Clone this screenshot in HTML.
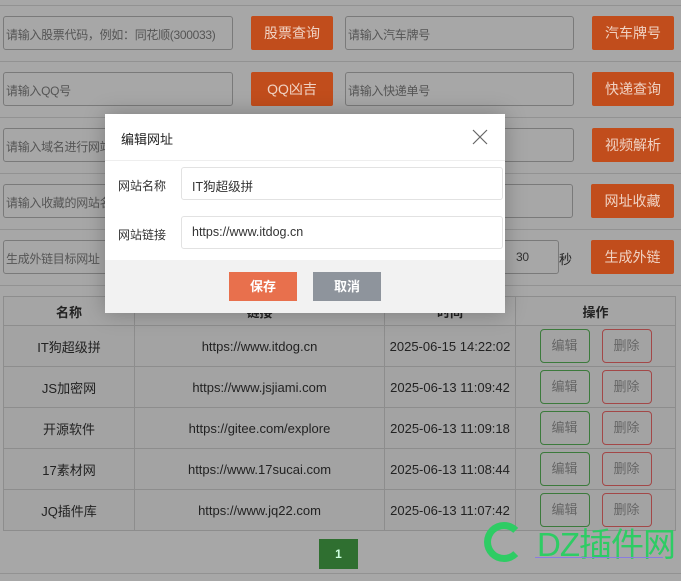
<!DOCTYPE html>
<html><head><meta charset="utf-8"><style>
*{box-sizing:border-box;margin:0;padding:0}
body{width:681px;height:581px;overflow:hidden;background:#a7a7a7;font-family:"Liberation Sans","Noto Sans CJK SC",sans-serif;position:relative;color:#222}
.a{position:absolute}
.hl{position:absolute;left:0;width:681px;height:1px;background:#929292}
.in{position:absolute;height:34px;border:1px solid #7a7a7a;border-radius:3px;font-size:12px;color:#555;padding:9px 2px;white-space:nowrap;overflow:hidden;letter-spacing:-0.3px}
.bt{position:absolute;height:34px;background:#c14d1c;color:#f0d2c3;font-size:14px;text-align:center;line-height:34px;border-radius:2px}
table{position:absolute;left:3px;top:296px;width:673px;border-collapse:collapse;font-size:13px;background:#a3a3a3}
td,th{border:1px solid #8d8d8d;text-align:center;height:41px}
th{height:29px;font-weight:bold;background:#a5a5a5}
.e,.d{display:inline-block;width:50px;height:34px;line-height:32px;border-radius:4px;color:#666;font-size:13px;vertical-align:middle}
.e{border:1px solid #3c7a3c;margin-right:12px}.d{border:1px solid #a34848}
.modal{position:absolute;left:105px;top:114px;width:400px;height:199px;background:#fff;box-shadow:0 0 20px rgba(0,0,0,.25)}
.mi{position:absolute;left:76px;width:322px;height:33px;border:1px solid #e2e2e2;border-radius:3px;font-size:12.5px;padding:8px 10px;color:#333}
.ml{position:absolute;left:13px;font-size:12px;color:#333}
</style></head><body>
<div class="hl" style="top:5px"></div><div class="hl" style="top:61px"></div><div class="hl" style="top:117px"></div><div class="hl" style="top:173px"></div><div class="hl" style="top:229px"></div><div class="hl" style="top:285px"></div><div class="hl" style="top:573px"></div>
<div class="in" style="left:3px;top:16px;width:230px">请输入股票代码，例如：同花顺(300033)</div>
<div class="bt" style="left:251px;top:16px;width:82px">股票查询</div>
<div class="in" style="left:345px;top:16px;width:229px">请输入汽车牌号</div>
<div class="bt" style="left:592px;top:16px;width:82px">汽车牌号</div>
<div class="in" style="left:3px;top:72px;width:230px">请输入QQ号</div>
<div class="bt" style="left:251px;top:72px;width:82px">QQ凶吉</div>
<div class="in" style="left:345px;top:72px;width:229px">请输入快递单号</div>
<div class="bt" style="left:592px;top:72px;width:82px">快递查询</div>
<div class="in" style="left:3px;top:128px;width:230px">请输入域名进行网站</div>
<div class="in" style="left:345px;top:128px;width:229px">请输入视频地址</div>
<div class="bt" style="left:592px;top:128px;width:82px">视频解析</div>
<div class="in" style="left:3px;top:184px;width:230px">请输入收藏的网站名</div>
<div class="in" style="left:345px;top:184px;width:228px"></div>
<div class="bt" style="left:591px;top:184px;width:83px">网址收藏</div>
<div class="in" style="left:3px;top:240px;width:230px">生成外链目标网址</div>
<div class="in" style="left:500px;top:240px;width:59px;color:#333;padding-left:15px">30</div>
<div class="a" style="left:559px;top:249px;font-size:13px">秒</div>
<div class="bt" style="left:591px;top:240px;width:83px">生成外链</div>
<table>
<tr><th style="width:131px">名称</th><th style="width:250px">链接</th><th style="width:131px">时间</th><th>操作</th></tr>
<tr><td>IT狗超级拼</td><td>https://www.itdog.cn</td><td>2025-06-15 14:22:02</td><td><span class="e">编辑</span><span class="d">删除</span></td></tr>
<tr><td>JS加密网</td><td>https://www.jsjiami.com</td><td>2025-06-13 11:09:42</td><td><span class="e">编辑</span><span class="d">删除</span></td></tr>
<tr><td>开源软件</td><td>https://gitee.com/explore</td><td>2025-06-13 11:09:18</td><td><span class="e">编辑</span><span class="d">删除</span></td></tr>
<tr><td>17素材网</td><td>https://www.17sucai.com</td><td>2025-06-13 11:08:44</td><td><span class="e">编辑</span><span class="d">删除</span></td></tr>
<tr><td>JQ插件库</td><td>https://www.jq22.com</td><td>2025-06-13 11:07:42</td><td><span class="e">编辑</span><span class="d">删除</span></td></tr>
</table>
<div class="a" style="left:319px;top:539px;width:39px;height:30px;background:#2f6f30;color:#cfd;font-size:12px;font-weight:bold;text-align:center;line-height:30px">1</div>
<div class="a" style="left:484px;top:522px;width:40px;height:40px;border:7px solid #2ecc64;border-right-color:transparent;border-radius:50%"></div>
<div class="a" style="left:537px;top:518px;font-size:33px;color:#2ecc64;letter-spacing:-1px">DZ插件网</div>
<div class="a" style="left:535px;top:557px;width:128px;height:1px;background:#8a7ce0"></div>
<div class="modal">
<div class="a" style="left:16px;top:15px;font-size:13px;color:#222">编辑网址</div>
<svg class="a" style="left:367px;top:15px" width="16" height="16" viewBox="0 0 16 16"><path d="M1 1L15 15M15 1L1 15" stroke="#666" stroke-width="1.2" fill="none"/></svg>
<div class="a" style="left:0;top:46px;width:400px;height:1px;background:#eee"></div>
<div class="ml" style="top:63px">网站名称</div>
<div class="mi" style="top:53px">IT狗超级拼</div>
<div class="ml" style="top:112px">网站链接</div>
<div class="mi" style="top:102px">https://www.itdog.cn</div>
<div class="a" style="left:0;top:146px;width:400px;height:53px;background:#f2f2f2"></div>
<div class="a" style="left:124px;top:158px;width:68px;height:29px;background:#e8704d;color:#fff;font-size:13px;font-weight:bold;text-align:center;line-height:29px">保存</div>
<div class="a" style="left:208px;top:158px;width:68px;height:29px;background:#8e949c;color:#fff;font-size:13px;font-weight:bold;text-align:center;line-height:29px">取消</div>
</div>
</body></html>
